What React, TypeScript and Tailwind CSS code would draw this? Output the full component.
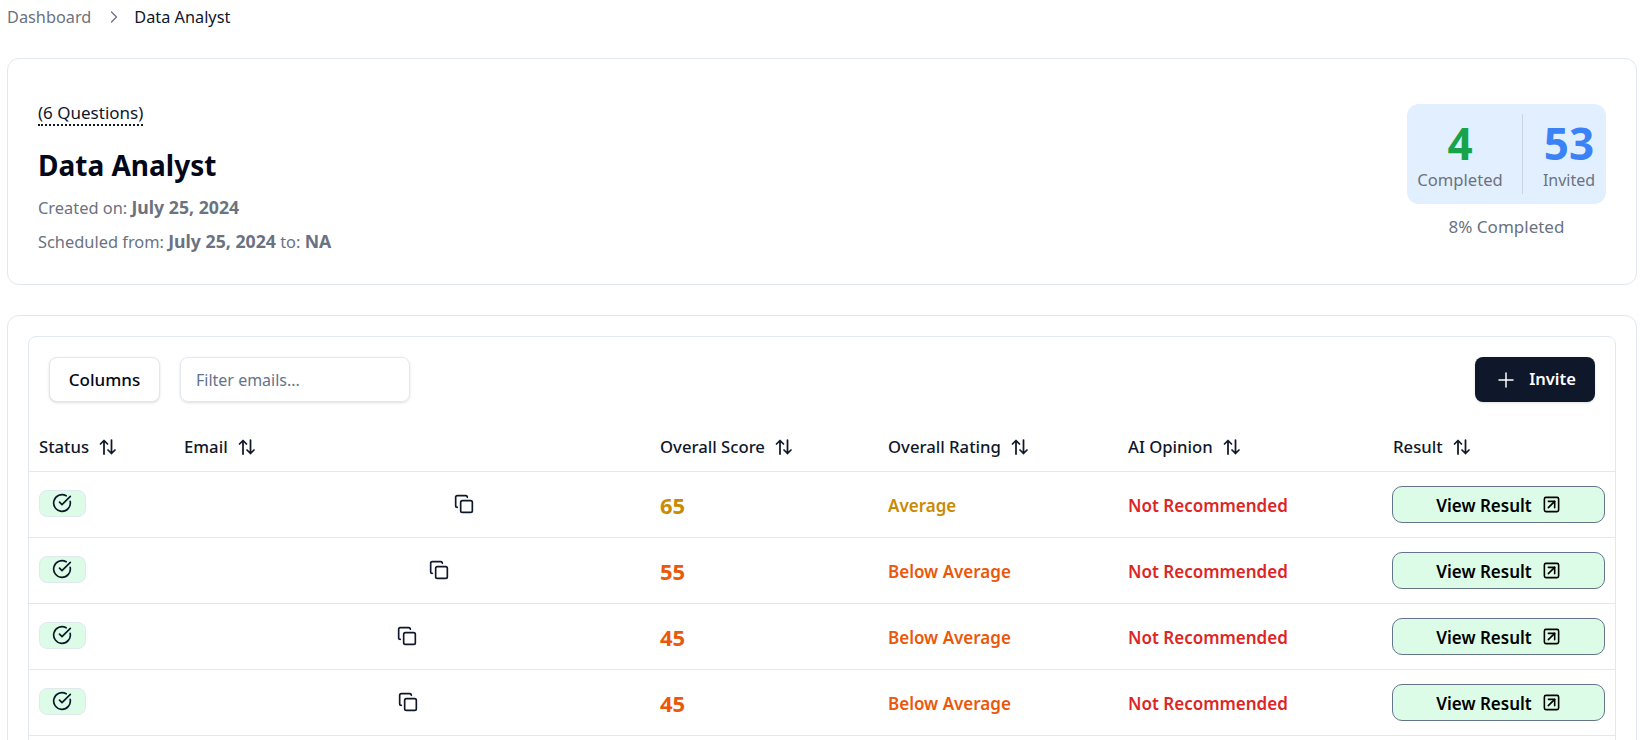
import { ChevronRight, CircleCheckBig, Copy, Plus, SquareArrowUpRight } from 'lucide-react';

const columns = [
  { name: 'Status', width: 'w-[145px]' },
  { name: 'Email', width: 'w-[476px]' },
  { name: 'Overall Score', width: 'w-[228px]' },
  { name: 'Overall Rating', width: 'w-[240px]' },
  { name: 'AI Opinion', width: 'w-[265px]' },
  { name: 'Result', width: '' },
];

const rows = [
  { score: 65, rating: 'Average', tone: 'text-[#ca8a04]', copyOffset: 'ml-[270px]' },
  { score: 55, rating: 'Below Average', tone: 'text-[#ea580c]', copyOffset: 'ml-[245px]' },
  { score: 45, rating: 'Below Average', tone: 'text-[#ea580c]', copyOffset: 'ml-[213px]' },
  { score: 45, rating: 'Below Average', tone: 'text-[#ea580c]', copyOffset: 'ml-[214px]' },
];

const SortIcon = () => (
  <svg width="18" height="16" viewBox="0 0 18 16" fill="none" stroke="#0f172a" strokeWidth="1.75" strokeLinecap="round" strokeLinejoin="round">
    <path d="M5 15V1.5M1.5 5L5 1.5L8.5 5" />
    <path d="M12.5 1V14.5M9 11l3.5 3.5L16 11" />
  </svg>
);

const SummaryCard = () => (
  <section className="mt-[29px] flex h-[227px] items-start justify-between rounded-xl border border-[#e2e8f0] pl-[30px] pr-[30px]">
    <div className="pt-[43px]">
      <span className="block w-fit border-b-2 border-dotted border-[#0f172a] text-[17px] leading-[22px] text-[#0f172a]">
        (6 Questions)
      </span>
      <h1 className="mt-[19px] text-[28px] font-bold leading-[40px] text-[#020817]">Data Analyst</h1>
      <p className="mt-[10px] text-[16.4px] leading-[24px] text-[#6b7280]">
        Created on: <b className="text-[17.7px]">July 25, 2024</b>
      </p>
      <p className="mt-[9px] text-[16.4px] leading-[24px] text-[#6b7280]">
        Scheduled from: <b className="text-[17.7px]">July 25, 2024</b> to: <b className="text-[17.7px]">NA</b>
      </p>
    </div>
    <div className="pt-[45px]">
      <div className="flex h-[100px] w-[199px] items-center rounded-xl bg-[#e2efff]">
        <div className="mr-[9px] flex w-[106px] flex-col items-center">
          <span className="text-[44px] font-bold leading-[52px] text-[#16a34a]">4</span>
          <span className="text-[16.6px] leading-[22px] text-[#6b7280]">Completed</span>
        </div>
        <div className="h-[80px] w-px bg-[#cbd5e1]" />
        <div className="flex flex-1 flex-col items-center pl-[9px]">
          <span className="text-[44px] font-bold leading-[52px] text-[#3b82f6]">53</span>
          <span className="text-[16px] leading-[22px] text-[#6b7280]">Invited</span>
        </div>
      </div>
      <p className="mt-[12px] text-center text-[17px] leading-[22px] text-[#6b7280]">8% Completed</p>
    </div>
  </section>
);

const Toolbar = () => (
  <div className="flex h-[82px] items-center justify-between pb-[2px] pl-[20px] pr-[20px] pt-[5px]">
    <div className="flex items-center gap-[20px]">
      <button className="h-[45px] w-[111px] rounded-lg border border-[#e2e8f0] bg-white text-[17px] font-medium text-[#020817] shadow-sm">
        Columns
      </button>
      <input
        placeholder="Filter emails..."
        className="h-[45px] w-[230px] rounded-lg border border-[#e2e8f0] px-[15px] text-[16px] shadow-sm outline-none placeholder:text-[#64748b]"
      />
    </div>
    <button className="flex h-[45px] w-[120px] items-center justify-center gap-[11px] rounded-lg bg-[#0f172a] text-[16.5px] font-semibold text-white shadow-sm">
      <Plus className="size-6" strokeWidth={1.5} />
      Invite
    </button>
  </div>
);

const ResultsTable = () => (
  <table className="w-full table-fixed border-collapse">
    <thead>
      <tr className="h-[52px] border-b border-[#e2e8f0]">
        {columns.map((col) => (
          <th key={col.name} className={`${col.width} px-[10px] pt-[4px] text-left text-[16.7px] font-medium text-[#0f172a]`}>
            <span className="flex items-center gap-[10px]">
              {col.name}
              <SortIcon />
            </span>
          </th>
        ))}
      </tr>
    </thead>
    <tbody>
      {rows.map((row, i) => (
        <tr key={i} className="h-[66px] border-b border-[#e2e8f0]">
          <td className="px-[10px] pb-[2px]">
            <span className="flex h-[27px] w-[47px] items-center justify-center rounded-lg border border-[#e2e8f0] bg-[#dcfce7] pr-[1px]">
              <CircleCheckBig className="size-5 text-[#0f172a]" />
            </span>
          </td>
          <td className="px-[10px]">
            <Copy className={`size-5 text-[#0f172a] ${row.copyOffset}`} />
          </td>
          <td className={`px-[10px] pt-[3px] text-[22px] font-bold ${row.tone}`}>{row.score}</td>
          <td className={`px-[10px] pt-[4px] text-[17px] font-semibold ${row.tone}`}>{row.rating}</td>
          <td className="px-[10px] pt-[4px] text-[17px] font-semibold text-[#dc2626]">Not Recommended</td>
          <td className="pl-[9px] pr-[10px]">
            <button className="flex h-[37px] w-[213px] items-center justify-center gap-[10px] rounded-[10px] border border-[#64748b] bg-[#dcfce7] text-[17px] font-semibold text-black">
              <span className="pt-[3px]">View Result</span>
              <SquareArrowUpRight className="size-[19px]" />
            </button>
          </td>
        </tr>
      ))}
    </tbody>
  </table>
);

export default function App() {
  return (
    <div className="h-[740px] overflow-hidden bg-white pl-[7px] pr-[4px] font-['Noto_Sans',sans-serif]">
      <nav className="flex h-[29px] items-center pt-[5px] text-[16.3px]">
        <span className="text-[#6b7280]">Dashboard</span>
        <ChevronRight className="ml-[13px] mr-[10px] size-5 text-[#6b7280]" strokeWidth={1.5} />
        <span className="text-[#0f172a]">Data Analyst</span>
      </nav>
      <SummaryCard />
      <section className="mt-[30px] h-[500px] rounded-t-xl border border-[#e2e8f0] px-[20px] pt-[20px]">
        <div className="h-[500px] rounded-t-lg border border-[#e2e8f0]">
          <Toolbar />
          <ResultsTable />
        </div>
      </section>
    </div>
  );
}
